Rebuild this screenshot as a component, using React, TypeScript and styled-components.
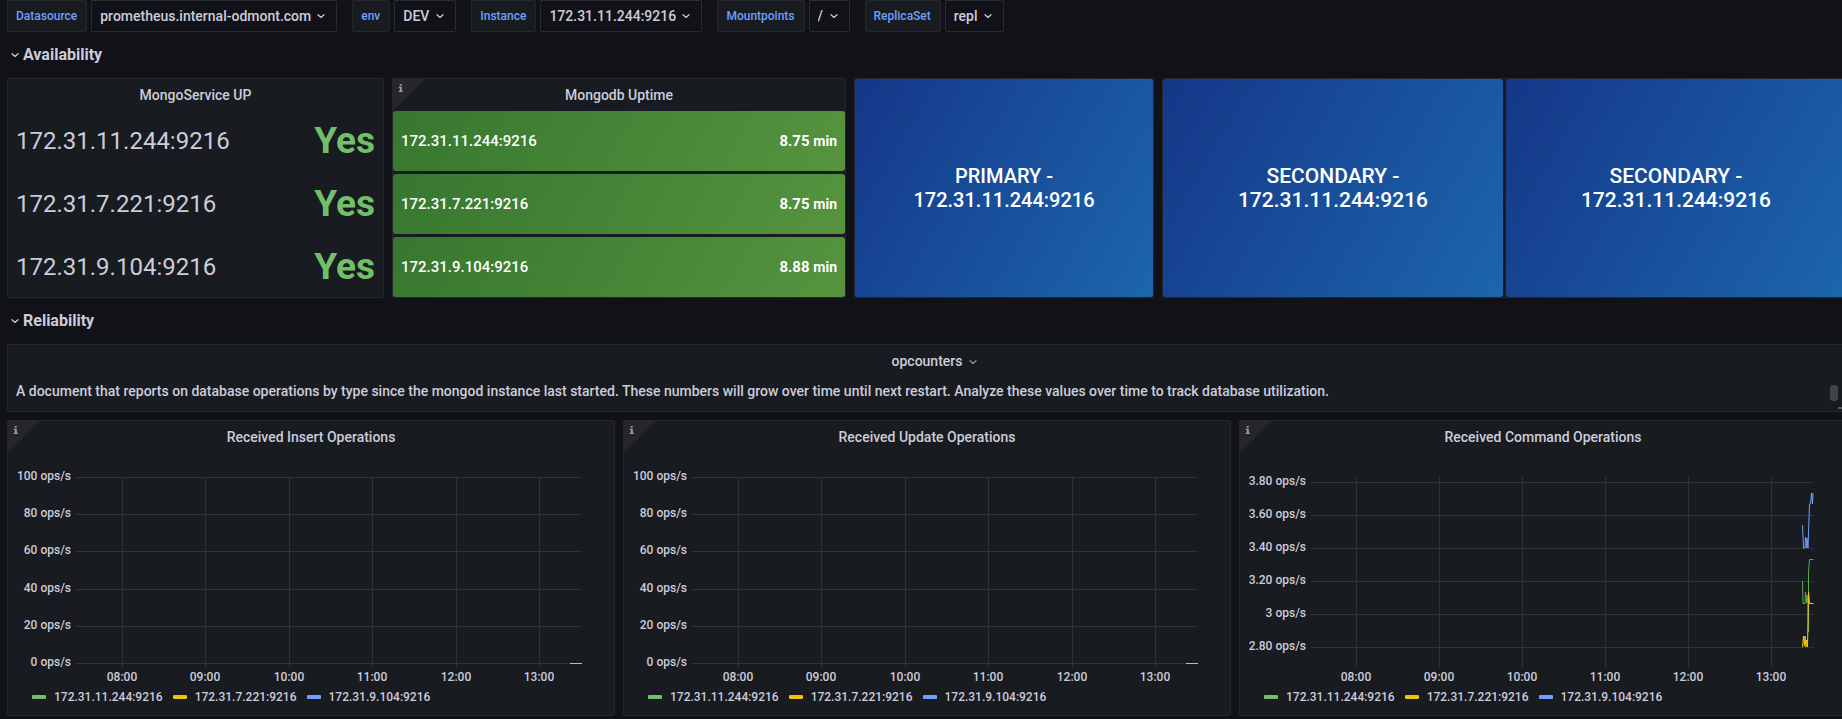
import React, { useId } from "react";
import styled, { createGlobalStyle } from "styled-components";

const GlobalStyle = createGlobalStyle`
  *, *::before, *::after { box-sizing: border-box; }
  body {
    margin: 0;
    background: #111217;
    color: #ccccdc;
    font-family: Roboto, "Liberation Sans", sans-serif;
    font-size: 14px;
    font-weight: 500;
    line-height: 22px;
    -webkit-font-smoothing: antialiased;
  }
  h2, h3, p, ul { margin: 0; padding: 0; font: inherit; }
  ul { list-style: none; }
  button, select { font: inherit; color: inherit; background: none; border: 0; margin: 0; padding: 0; cursor: pointer; }
`;

const Page = styled.div`
  overflow-x: clip;
  padding-bottom: 3px;
`;

const Toolbar = styled.div`
  display: flex;
  flex-wrap: wrap;
  gap: 8px 15px;
  padding-left: 7px;
  margin-bottom: 8px;
`;

const Variable = styled.div`
  display: flex;
  gap: 4px;
  height: 32px;
`;

const VariableLabel = styled.label`
  display: flex;
  align-items: center;
  padding: 0 9px 0 8px;
  background: #181b1f;
  border: 1px solid #25272c;
  border-radius: 2px;
  color: #6e9fff;
  font-size: 12px;
`;

const SelectBox = styled.span`
  display: flex;
  align-items: center;
  gap: 2px;
  padding: 0 7px 0 8px;
  border: 1px dotted #43444b;
  border-radius: 2px;

  select {
    appearance: none;
    height: 30px;
    outline: 0;
  }
  select option { background: #181b1f; }
  svg { pointer-events: none; }
`;

/* 24-column dashboard grid; its last pixels run under the right edge of the window. */
const Grid = styled.main`
  display: grid;
  grid-template-columns: repeat(24, minmax(0, 1fr));
  grid-auto-rows: minmax(30px, auto);
  gap: 8px;
  margin: 0 -5px 0 7px;
`;

const RowHeading = styled.h2`
  grid-column: 1 / -1;
  display: flex;
  align-items: center;

  button {
    display: flex;
    align-items: center;
    font-size: 16px;
    font-weight: 700;
  }
`;

const PanelFrame = styled.section<{ $w: number; $h: number }>`
  grid-column: span ${(p) => p.$w};
  grid-row: span ${(p) => p.$h};
  position: relative;
  display: flex;
  flex-direction: column;
  background: #181b1f;
  border: 1px solid #25272c;
  border-radius: 2px;
  overflow: hidden;
`;

const PanelTitle = styled.h3`
  display: flex;
  align-items: center;
  justify-content: center;
  flex: none;
  height: 32px;

  button { position: relative; }
  button svg { position: absolute; top: 4px; left: 100%; margin-left: 3px; color: #9394a0; }
`;

const InfoCorner = styled.svg`
  position: absolute;
  top: 0;
  left: 0;
`;

const StatList = styled.ul`
  flex: 1;
  display: flex;
  flex-direction: column;
  gap: 3px;
`;

const StatusRow = styled.li`
  flex: 1;
  display: flex;
  align-items: center;
  justify-content: space-between;
  padding: 0 8px;
  font-size: 24px;
  font-weight: 400;
`;

const StatusValue = styled.strong`
  color: #73bf69;
  font-size: 37px;
  font-weight: 700;
`;

const UptimeRow = styled(StatusRow)`
  border-radius: 3px;
  background: linear-gradient(120deg, #37772f, #56943f);
  color: #fff;
  font-size: 15px;
  font-weight: 500;
`;

const UptimeValue = styled.strong`
  font-weight: 700;
  small { font-size: 14px; }
`;

const Members = styled.div`
  flex: 1;
  display: flex;
  gap: 3px;
`;

const Member = styled.div<{ $size: number }>`
  flex: 1;
  display: flex;
  flex-direction: column;
  align-items: center;
  justify-content: center;
  border-radius: 3px;
  background: linear-gradient(120deg, #153788, #1c66ac);
  color: #fff;
  font-size: ${(p) => p.$size}px;
  line-height: 24px;
`;

const TextBody = styled.p`
  padding: 3px 8px;
`;

const ScrollThumb = styled.span`
  position: absolute;
  top: 40px;
  right: 8px;
  width: 8px;
  height: 16px;
  border-radius: 3px;
  background: #424449;
`;

const ResizeMark = styled.span`
  position: absolute;
  right: 2px;
  bottom: 2px;
  width: 6px;
  height: 6px;
  border: solid #5b5c63;
  border-width: 0 2px 2px 0;
`;

const ChartSvg = styled.svg`
  display: block;
  width: 100%;
  text { fill: #ccccdc; font-size: 12px; }
`;

const Legend = styled.ul`
  display: flex;
  gap: 10px;
  padding-left: 24px;
  font-size: 12px;
  line-height: 20px;
`;

const LegendItem = styled.li<{ $color: string }>`
  display: flex;
  align-items: center;
  gap: 8px;

  &::before {
    content: "";
    width: 14px;
    height: 4px;
    border-radius: 1px;
    background: ${(p) => p.$color};
  }
`;

function Chevron() {
  return (
    <svg width="16" height="16" viewBox="0 0 16 16" fill="none" stroke="currentColor" strokeWidth="1.3" strokeLinecap="round" strokeLinejoin="round" aria-hidden="true">
      <path d="M5 6.8 8 9.4 11 6.8" />
    </svg>
  );
}

function Info() {
  return (
    <InfoCorner width="32" height="32" viewBox="0 0 32 32" aria-hidden="true">
      <path d="M0 0H32L0 32Z" fill="#25272c" />
      <path d="M6.7 5h2v1.8h-2zM5.8 7.8h3v4h1v1.2h-4v-1.2h1V9h-1z" fill="#9c9cab" />
    </InfoCorner>
  );
}

function VariablePicker({ name, value }: { name: string; value: string }) {
  const id = useId();
  return (
    <Variable>
      <VariableLabel htmlFor={id}>{name}</VariableLabel>
      <SelectBox>
        <select id={id} defaultValue={value}>
          <option>{value}</option>
        </select>
        <Chevron />
      </SelectBox>
    </Variable>
  );
}

function RowTitle({ children }: { children: string }) {
  return (
    <RowHeading>
      <button type="button" aria-expanded="true">
        <Chevron />
        {children}
      </button>
    </RowHeading>
  );
}

type Series = { color: string; points: string };
type ChartProps = {
  title: string;
  yTicks: { label: string; y: number }[];
  xTicks: number[];
  left: number;
  right: number;
  labelRight: number;
  series: Series[];
};

const HOURS = ["08:00", "09:00", "10:00", "11:00", "12:00", "13:00"];
const HOSTS = [
  { name: "172.31.11.244:9216", color: "#73bf69" },
  { name: "172.31.7.221:9216", color: "#eec20b" },
  { name: "172.31.9.104:9216", color: "#6e9fff" },
];

function ChartPanel({ title, yTicks, xTicks, left, right, labelRight, series }: ChartProps) {
  return (
    <PanelFrame $w={8} $h={8}>
      <Info />
      <PanelTitle>{title}</PanelTitle>
      <ChartSvg viewBox="0 1 606 234" role="img" aria-label={title}>
        <g stroke="#303336" strokeWidth="1">
          {yTicks.map((t) => (
            <line key={t.label} x1={left} x2={right} y1={t.y + 0.5} y2={t.y + 0.5} />
          ))}
          {xTicks.map((x) => (
            <line key={x} x1={x + 0.5} x2={x + 0.5} y1={25} y2={215} />
          ))}
        </g>
        {yTicks.map((t) => (
          <text key={t.label} x={labelRight} y={t.y + 3} textAnchor="end">{t.label}</text>
        ))}
        {xTicks.map((x, i) => (
          <text key={x} x={x} y={229} textAnchor="middle">{HOURS[i]}</text>
        ))}
        {series.map((s) => (
          <polyline key={s.color} points={s.points} fill="none" stroke={s.color} strokeWidth="1" />
        ))}
      </ChartSvg>
      <Legend>
        {HOSTS.map((h) => (
          <LegendItem key={h.name} $color={h.color}>{h.name}</LegendItem>
        ))}
      </Legend>
    </PanelFrame>
  );
}

const idleAxis = {
  yTicks: [
    { label: "100 ops/s", y: 25 },
    { label: "80 ops/s", y: 62 },
    { label: "60 ops/s", y: 99 },
    { label: "40 ops/s", y: 137 },
    { label: "20 ops/s", y: 174 },
    { label: "0 ops/s", y: 211 },
  ],
  xTicks: [114, 197, 281, 364, 448, 531],
  left: 68,
  right: 574,
  labelRight: 63,
  series: [{ color: "#b9bac8", points: "562,211.5 574,211.5" }],
};

const commandAxis = {
  yTicks: [
    { label: "3.80 ops/s", y: 30 },
    { label: "3.60 ops/s", y: 63 },
    { label: "3.40 ops/s", y: 96 },
    { label: "3.20 ops/s", y: 129 },
    { label: "3 ops/s", y: 162 },
    { label: "2.80 ops/s", y: 195 },
  ],
  xTicks: [116, 199, 282, 365, 448, 531],
  left: 71,
  right: 574,
  labelRight: 66,
  series: [
    { color: "#5fa650", points: "562.5,129 563,151.5 565,151.5 565.5,140 566.5,151 567,143 568,151.5 568.5,180 568.5,120 569.5,107.5 573.5,107.5" },
    { color: "#f2cc0c", points: "562.5,195 563.5,184 564.5,194 565,184 566,195 566.5,188 567.5,195 568.5,140 569.5,151.5 573.5,151.5" },
    { color: "#6e9fff", points: "562.5,73 563.5,96 565,96 565.5,85 566.5,96 567,86 568,96 569.5,52 570.5,52 571.5,41 572.5,52 573,41" },
  ],
};

export default function App() {
  return (
    <Page>
      <GlobalStyle />
      <Toolbar>
        <VariablePicker name="Datasource" value="prometheus.internal-odmont.com" />
        <VariablePicker name="env" value="DEV" />
        <VariablePicker name="Instance" value="172.31.11.244:9216" />
        <VariablePicker name="Mountpoints" value="/" />
        <VariablePicker name="ReplicaSet" value="repl" />
      </Toolbar>
      <Grid>
        <RowTitle>Availability</RowTitle>

        <PanelFrame $w={5} $h={6}>
          <PanelTitle>MongoService UP</PanelTitle>
          <StatList>
            {HOSTS.map((h) => (
              <StatusRow key={h.name}>
                {h.name}
                <StatusValue>Yes</StatusValue>
              </StatusRow>
            ))}
          </StatList>
        </PanelFrame>

        <PanelFrame $w={6} $h={6}>
          <Info />
          <PanelTitle>Mongodb Uptime</PanelTitle>
          <StatList>
            {HOSTS.map((h, i) => (
              <UptimeRow key={h.name}>
                {h.name}
                <UptimeValue>
                  {["8.75", "8.75", "8.88"][i]} <small>min</small>
                </UptimeValue>
              </UptimeRow>
            ))}
          </StatList>
        </PanelFrame>

        <PanelFrame $w={4} $h={6}>
          <Members>
            <Member $size={20}>
              <span>PRIMARY -</span>
              <span>172.31.11.244:9216</span>
            </Member>
          </Members>
        </PanelFrame>

        <PanelFrame $w={9} $h={6}>
          <Members>
            {[0, 1].map((i) => (
              <Member key={i} $size={21}>
                <span>SECONDARY -</span>
                <span>172.31.11.244:9216</span>
              </Member>
            ))}
          </Members>
        </PanelFrame>

        <RowTitle>Reliability</RowTitle>

        <PanelFrame $w={24} $h={2}>
          <PanelTitle>
            <button type="button">
              opcounters
              <Chevron />
            </button>
          </PanelTitle>
          <TextBody>
            A document that reports on database operations by type since the mongod instance last started. These
            numbers will grow over time until next restart. Analyze these values over time to track database
            utilization.
          </TextBody>
          <ScrollThumb />
          <ResizeMark />
        </PanelFrame>

        <ChartPanel title="Received Insert Operations" {...idleAxis} />
        <ChartPanel title="Received Update Operations" {...idleAxis} />
        <ChartPanel title="Received Command Operations" {...commandAxis} />
      </Grid>
    </Page>
  );
}
